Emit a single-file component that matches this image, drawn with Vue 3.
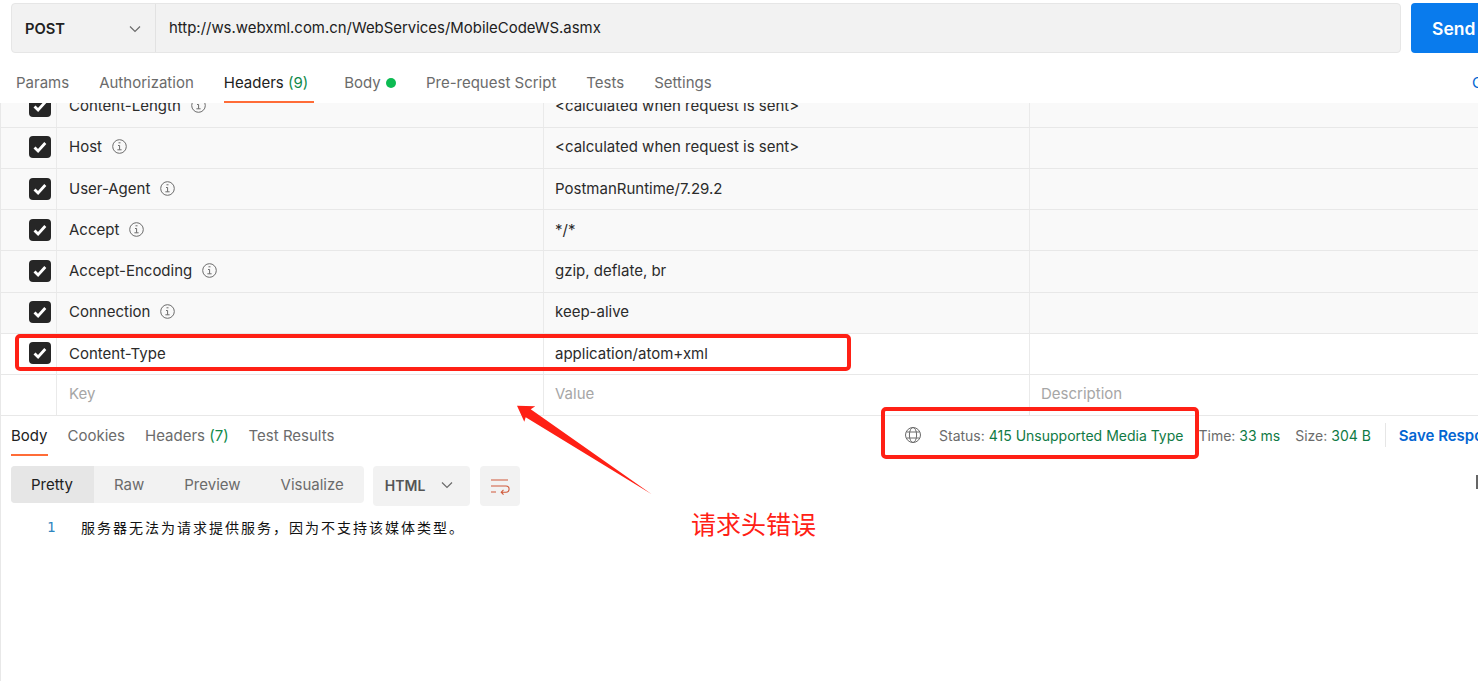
<script setup>
const rows = [
  { key: 'Content-Length', value: '<calculated when request is sent>' },
  { key: 'Host', value: '<calculated when request is sent>' },
  { key: 'User-Agent', value: 'PostmanRuntime/7.29.2' },
  { key: 'Accept', value: '*/*' },
  { key: 'Accept-Encoding', value: 'gzip, deflate, br' },
  { key: 'Connection', value: 'keep-alive' },
]
</script>

<template>
  <div class="page">
    <div class="urlbar">
      <div class="urlbox">
        <div class="method">
          <span>POST</span>
          <svg class="chev" width="14" height="14" viewBox="0 0 14 14"><path d="M2 4.500l5 5 5-5" fill="none" stroke="#6b6b6b" stroke-width="1.2"/></svg>
        </div>
        <div class="url">http://ws.webxml.com.cn/WebServices/MobileCodeWS.asmx</div>
      </div>
      <div class="send">Send</div>
    </div>

    <div class="reqtabs">
      <span class="tab">Params</span>
      <span class="tab">Authorization</span>
      <span class="tab active">Headers <em>(9)</em></span>
      <span class="tab">Body <i class="dot"></i></span>
      <span class="tab">Pre-request Script</span>
      <span class="tab">Tests</span>
      <span class="tab">Settings</span>
      <span class="cookies">Cookies</span>
    </div>

    <div class="table">
      <div class="table-inner">
        <div v-for="r in rows" :key="r.key" class="row">
          <div class="c0">
            <span class="cb"><svg width="16" height="16" viewBox="0 0 16 16"><path d="M2.500 8.400l3.600 3.600 7.200-8" fill="none" stroke="#fff" stroke-width="2.800"/></svg></span>
          </div>
          <div class="c1">
            {{ r.key }}
            <svg class="info" width="15" height="15" viewBox="0 0 15 15"><circle cx="7.500" cy="7.500" r="6.800" fill="none" stroke="#6b6b6b"/><path d="M6.500 3.800h2M6 6.500h1.600v4.200M5.400 10.800h4.200" fill="none" stroke="#6b6b6b"/></svg>
          </div>
          <div class="c2">{{ r.value }}</div>
          <div class="c3"></div>
        </div>
        <div class="row white ct">
          <div class="c0">
            <span class="cb"><svg width="16" height="16" viewBox="0 0 16 16"><path d="M2.500 8.400l3.600 3.600 7.200-8" fill="none" stroke="#fff" stroke-width="2.800"/></svg></span>
          </div>
          <div class="c1">Content-Type</div>
          <div class="c2">application/atom+xml</div>
          <div class="c3"></div>
        </div>
        <div class="row white ph">
          <div class="c0"></div>
          <div class="c1">Key</div>
          <div class="c2">Value</div>
          <div class="c3">Description</div>
        </div>
      </div>
    </div>

    <div class="lower">
      <div class="resbar">
        <div class="restabs">
          <span class="rtab active">Body</span>
          <span class="rtab">Cookies</span>
          <span class="rtab">Headers <em>(7)</em></span>
          <span class="rtab">Test Results</span>
        </div>
        <div class="resmeta">
          <svg class="globe" width="18" height="18" viewBox="0 0 18 18" fill="none" stroke="#6b6b6b" stroke-width="1"><circle cx="9" cy="9" r="7.500"/><ellipse cx="9" cy="9" rx="3.600" ry="7.500"/><path d="M2.400 6h13.200M2.400 12h13.200"/></svg>
          <span class="m status">Status: <b>415 Unsupported Media Type</b></span>
          <span class="m time">Time: <b>33 ms</b></span>
          <span class="m size">Size: <b>304 B</b></span>
          <span class="divider"></span>
          <span class="save">Save Response</span>
        </div>
      </div>

      <div class="tools">
        <div class="seg">
          <span class="on">Pretty</span>
          <span>Raw</span>
          <span>Preview</span>
          <span>Visualize</span>
        </div>
        <div class="lang">
          <span>HTML</span>
          <svg width="14" height="14" viewBox="0 0 14 14"><path d="M2 4.500l5 5 5-5" fill="none" stroke="#6b6b6b" stroke-width="1.200"/></svg>
        </div>
        <div class="wrap">
          <svg width="20" height="18" viewBox="0 0 20 18" fill="none" stroke="#d0593a" stroke-width="1.100"><path d="M1 3h17M1 9h15a2.600 2.600 0 0 1 0 6.200h-4.500M1 15h5M13.500 12.800l-2.300 2.400 2.300 2.400"/></svg>
        </div>
      </div>

      <div class="code">
        <span class="ln">1</span>
        <span class="codetext">服务器无法为请求提供服务，因为不支持该媒体类型。</span>
      </div>
    </div>

    <div class="mark box1"></div>
    <div class="mark box2"></div>
    <svg class="arrow" width="140" height="95" viewBox="0 0 140 95"><path d="M0 0.700L18.300 1.300L13.700 4.300L134.700 89.300L8.700 12.300L7.300 16.700Z" fill="#ff2015"/></svg>
    <div class="note">请求头错误</div>
    <div class="tick"></div>
  </div>
</template>

<style>
html, body { margin: 0; overflow: hidden; background: #fff; }
</style>

<style scoped>
.page {
  position: relative;
  width: 1478px;
  height: 681px;
  overflow: hidden;
  box-sizing: border-box;
  background: #fff;
  font-family: Inter, "Noto Sans CJK SC", sans-serif;
  font-size: 15px;
  color: #212121;
}
.urlbar { display: flex; gap: 10px; padding: 3px 0 0 11px; height: 50px; }
.urlbox {
  flex: none;
  width: 1390px;
  height: 50px;
  box-sizing: border-box;
  display: flex;
  background: #f2f2f2;
  border: 1px solid #e6e6e6;
  border-radius: 4px;
}
.method {
  width: 144px;
  box-sizing: border-box;
  padding: 2px 13px 0 13px;
  display: flex;
  align-items: center;
  justify-content: space-between;
  border-right: 1px solid #e2e2e2;
  font-weight: 600;
  font-size: 14.700px;
  color: #212121;
}
.url { padding: 1px 0 0 13px; line-height: 46px; font-size: 14.930px; }
.send {
  width: 90px;
  height: 50px;
  flex: none;
  background: #097bed;
  color: #fff;
  border-radius: 4px 0 0 4px;
  font-weight: 600;
  font-size: 17.500px;
  line-height: 51px;
  padding-left: 21px;
  box-sizing: border-box;
}
.reqtabs {
  position: relative;
  display: flex;
  gap: 30px;
  height: 50px;
  padding-left: 16px;
  box-sizing: border-box;
}
.tab {
  height: 50px;
  box-sizing: border-box;
  padding-top: 20px;
  line-height: 20px;
  color: #6b6b6b;
  white-space: nowrap;
}
.tab.active { color: #212121; border-bottom: 2px solid #ff6c37; padding-right: 6px; }
.tab em, .rtab em { font-style: normal; color: #0f8a4a; }
.dot { display: inline-block; width: 10px; height: 10px; border-radius: 50%; background: #0cbb52; margin-left: 1px; }
.cookies { position: absolute; left: 1472px; top: 20px; line-height: 20px; color: #0265d2; }
.table { height: 313px; overflow: hidden; }
.table-inner { margin-top: -16.400px; }
.row {
  display: grid;
  grid-template-columns: 57px 487px 486px 1fr;
  height: 41.200px;
  box-sizing: border-box;
  background: #f9f9f9;
  border-bottom: 1px solid #e8e8e8;
}
.row.white { background: #fff; }
.row > div {
  display: flex;
  align-items: center;
  box-sizing: border-box;
  padding: 0 0 2px 11px;
  border-right: 1px solid #eaeaea;
  color: #2b2b2b;
  white-space: nowrap;
}
.row > .c1 { padding-left: 12px; }
.row > .c0 { padding: 0 5px 0 0; justify-content: flex-end; box-shadow: inset 1px 0 0 #e8e8e8; }
.row > .c3 { border-right: 0; }
.row.ct > .c1, .row.ct > .c2 { padding-bottom: 0; }
.row.ph > div { color: #a6a6a6; padding-bottom: 4px; }
.cb {
  width: 22px;
  height: 22px;
  margin-top: -1px;
  border-radius: 4px;
  background: #262626;
  display: flex;
  align-items: center;
  justify-content: center;
}
.info { margin-left: 10px; }
.lower { height: 265px; box-shadow: inset 1px 0 0 #e8e8e8; }
.resbar { display: flex; justify-content: space-between; height: 40px; padding-left: 11px; }
.restabs { display: flex; gap: 20px; }
.rtab {
  height: 40px;
  box-sizing: border-box;
  padding-top: 10px;
  line-height: 20px;
  color: #6b6b6b;
  white-space: nowrap;
}
.rtab.active { color: #212121; border-bottom: 2px solid #ff6c37; }
.resmeta {
  display: flex;
  align-items: center;
  height: 38px;
  font-size: 14px;
  color: #6b6b6b;
  white-space: nowrap;
  width: 574px;
  flex: none;
  box-sizing: border-box;
}
.globe { flex: none; }
.m b { font-weight: 400; color: #0f7a45; }
.status { margin-left: 17px; }
.time, .size { margin-left: 15px; }
.divider { width: 1px; height: 24px; background: #e6e6e6; margin-left: 14px; flex: none; }
.save { margin-left: 13px; color: #0265d2; font-weight: 600; font-size: 15px; }
.tools { display: flex; padding: 10px 0 0 11px; }
.seg {
  display: flex;
  height: 37px;
  background: #f2f2f2;
  border-radius: 4px;
  overflow: hidden;
  color: #6b6b6b;
  line-height: 37px;
}
.seg span { padding: 0 20px; }
.seg .on { background: #e6e6e6; color: #212121; width: 83px; box-sizing: border-box; }
.lang {
  width: 97px;
  height: 40px;
  margin-left: 9px;
  box-sizing: border-box;
  background: #f2f2f2;
  border-radius: 4px;
  display: flex;
  align-items: center;
  justify-content: space-between;
  padding: 0 16px 2px 12px;
  color: #555;
  font-weight: 600;
  font-size: 14px;
}
.wrap {
  width: 40px;
  height: 40px;
  margin-left: 10px;
  background: #f2f2f2;
  border-radius: 4px;
  display: flex;
  align-items: center;
  justify-content: center;
}
.code { display: flex; align-items: center; padding: 9px 0 0 47px; height: 24px; }
.ln { color: #2f86c0; font-family: "DejaVu Sans Mono", monospace; font-size: 14px; width: 34px; flex: none; }
.codetext {
  font-family: "DejaVu Sans Mono", "Noto Sans CJK SC", monospace;
  font-size: 14px;
  letter-spacing: 2px;
  color: #111;
  white-space: nowrap;
}
.mark {
  position: absolute;
  box-sizing: border-box;
  border: 4px solid #ff2015;
  border-radius: 5px;
}
.box1 { left: 15px; top: 334px; width: 836px; height: 37px; }
.box2 { left: 881px; top: 407px; width: 318px; height: 52px; }
.arrow { position: absolute; left: 517px; top: 405px; }
.note {
  position: absolute;
  left: 691px;
  top: 506px;
  font-family: "Noto Sans CJK SC", sans-serif;
  font-size: 25px;
  line-height: 34px;
  color: #ff2015;
}
.tick { position: absolute; left: 1476px; top: 475px; width: 2px; height: 14px; background: #666; }
</style>
